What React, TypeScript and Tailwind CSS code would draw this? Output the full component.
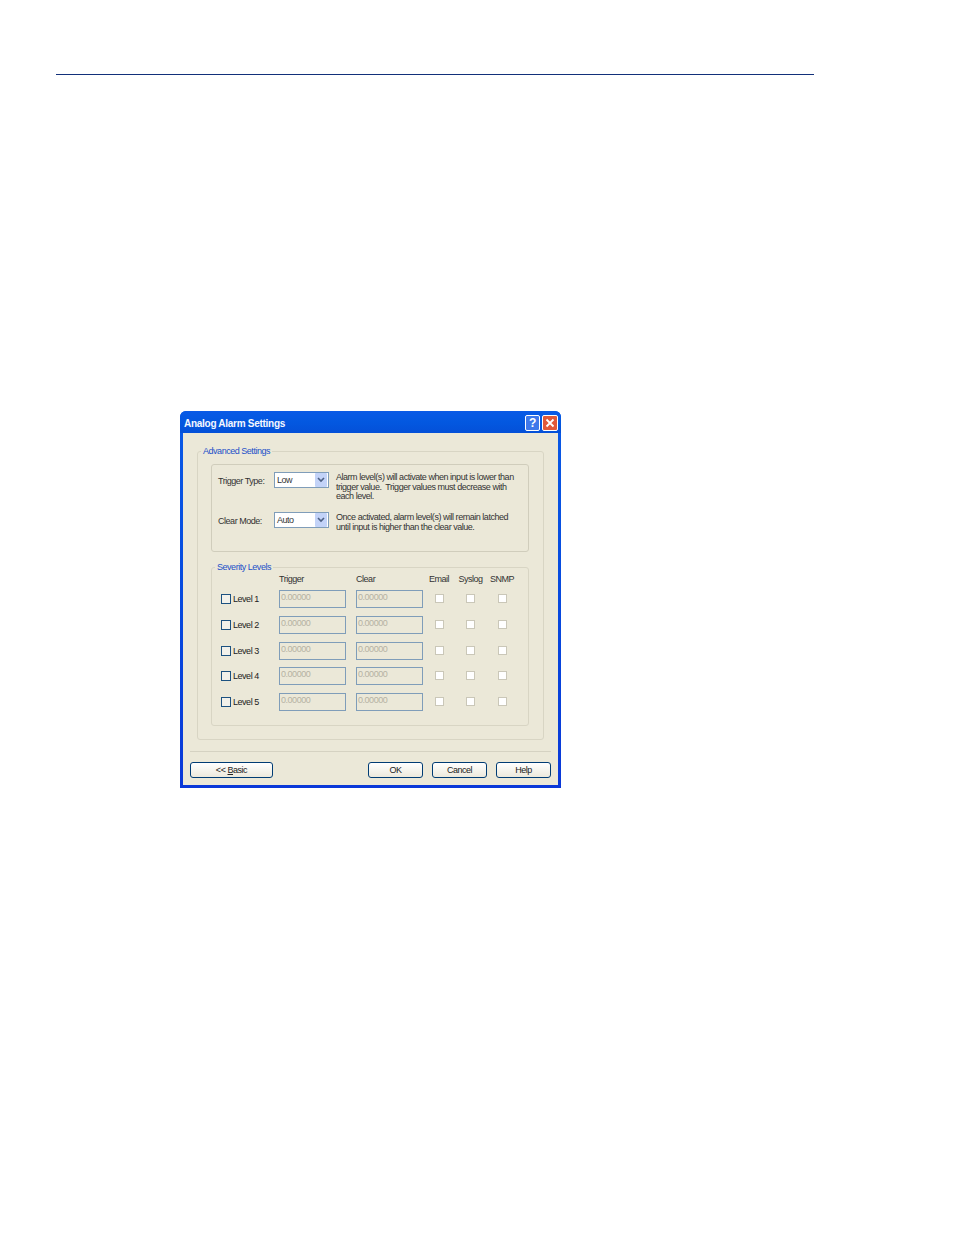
import React from "react";

const font = "font-['Liberation_Sans',Arial,sans-serif]";

const levels = [
  { name: "Level 1", gap: "mt-[5px]" },
  { name: "Level 2", gap: "mt-[8px]" },
  { name: "Level 3", gap: "mt-[8px]" },
  { name: "Level 4", gap: "mt-[7px]" },
  { name: "Level 5", gap: "mt-[8px]" },
];

const rowGrid = "grid grid-cols-[58px_67px_10px_67px_32px_31px_32px] items-center";

const Combo = ({ value }: { value: string }) => (
  <div className="flex h-[16px] w-[55px] items-center justify-between border border-[#7f9db9] bg-white pl-[2px] pr-px">
    <span>{value}</span>
    <span className="flex h-[14px] w-[12px] items-center justify-center rounded-[1px] bg-[#c3d3f8]">
      <svg width="8" height="6" viewBox="0 0 8 6">
        <path d="M1 1l3 3 3-3" fill="none" stroke="#4d6185" strokeWidth="1.6" />
      </svg>
    </span>
  </div>
);

const XpButton = ({ className, children }: { className: string; children: React.ReactNode }) => (
  <button className={`h-[16px] rounded-[3px] border border-[#003c74] bg-gradient-to-b from-white to-[#ece9dc] text-center leading-[12px] text-[#222] ${className}`}>
    {children}
  </button>
);

const App: React.FC = () => {
  return (
    <div className={`h-[1235px] w-[954px] bg-white pt-[74px] ${font}`}>
      <div className="ml-[56px] h-px w-[758px] bg-[#12307a]" />

      <div className="ml-[180px] mt-[336px] flex h-[377px] w-[381px] flex-col overflow-hidden rounded-t-[6px] bg-gradient-to-b from-[#0a5ae6] to-[#0a38d8] text-[9px] leading-[10px] tracking-[-0.47px] text-[#333]">
        {/* title bar */}
        <div className="flex h-[22px] shrink-0 items-center justify-between bg-gradient-to-b from-[#0a5ae6] via-[#0358e0] to-[#0450d8] pl-[4px] pr-[3px] pt-[2px]">
          <span className="mt-[2px] text-[10px] font-bold tracking-[-0.28px] text-[#f4f7ff]">Analog Alarm Settings</span>
          <div className="flex gap-[2px]">
            <span className="flex h-[16px] w-[15px] items-center justify-center rounded-[2px] border border-white bg-[#3f78ea] text-[12px] font-bold text-white">?</span>
            <span className="flex h-[16px] w-[16px] items-center justify-center rounded-[2px] border border-white bg-[#e0593a]">
              <svg width="10" height="10" viewBox="0 0 10 10">
                <path d="M1.5 1.5l7 7M8.5 1.5l-7 7" stroke="#fff" strokeWidth="1.8" />
              </svg>
            </span>
          </div>
        </div>

        {/* dialog body */}
        <div className="mx-[3px] mb-[3px] flex-1 bg-[#ebe8d8] pl-[14px] pr-[14px] pt-[12px]">
          <fieldset className="h-[295px] rounded-[3px] border border-[#d8d5c4]">
            <legend className="ml-[3px] h-[12px] px-[2px] leading-[12px] text-[#1c50c8]">Advanced Settings</legend>

            <div className="ml-[13px] mt-[7px] h-[88px] w-[318px] rounded-[3px] border border-[#d0cdbc] pl-[6px] pt-[7px]">
              <div className="flex h-[40px]">
                <span className="mt-[4px] w-[56px]">Trigger Type:</span>
                <Combo value="Low" />
                <p className="ml-[7px] mt-[1px] w-[186px] leading-[9.5px]">
                  Alarm level(s) will activate when input is lower than trigger value.&nbsp; Trigger values must decrease with each level.
                </p>
              </div>
              <div className="flex">
                <span className="mt-[4px] w-[56px]">Clear Mode:</span>
                <Combo value="Auto" />
                <p className="ml-[7px] mt-[1px] w-[186px] leading-[9.5px]">
                  Once activated, alarm level(s) will remain latched until input is higher than the clear value.
                </p>
              </div>
            </div>

            <fieldset className="ml-[13px] mt-[9px] h-[165px] w-[318px] rounded-[3px] border border-[#d8d5c4]">
              <legend className="ml-[3px] h-[12px] px-[2px] leading-[12px] text-[#1c50c8]">Severity Levels</legend>
              <div className="pl-[9px]">
                <div className={`${rowGrid} h-[12px]`}>
                  <span />
                  <span>Trigger</span>
                  <span />
                  <span>Clear</span>
                  <span className="text-center">Email</span>
                  <span className="text-center">Syslog</span>
                  <span className="text-center">SNMP</span>
                </div>
                {levels.map((level) => (
                  <div key={level.name} className={`${rowGrid} h-[18px] ${level.gap}`}>
                    <div className="flex items-center">
                      <span className="h-[10px] w-[10px] border border-[#1c5180] bg-[#f2f1ea]" />
                      <span className="ml-[2px] text-[#222]">{level.name}</span>
                    </div>
                    <div className="h-[18px] border border-[#7f9db9] pl-[1px] leading-[13px] text-[#b5b2a3]">0.00000</div>
                    <span />
                    <div className="h-[18px] border border-[#7f9db9] pl-[1px] leading-[13px] text-[#b5b2a3]">0.00000</div>
                    <span className="mx-auto mb-[2px] h-[9px] w-[9px] border border-[#cac7b8] bg-white" />
                    <span className="mx-auto mb-[2px] h-[9px] w-[9px] border border-[#cac7b8] bg-white" />
                    <span className="mx-auto mb-[2px] h-[9px] w-[9px] border border-[#cac7b8] bg-white" />
                  </div>
                ))}
              </div>
            </fieldset>
          </fieldset>

          {/* footer */}
          <div className="-ml-[7px] -mr-[7px] mt-[11px] h-px bg-[#d5d2c2]" />
          <div className="-ml-[7px] mt-[10px] flex w-[361px]">
            <XpButton className="w-[83px]">
              &lt;&lt; <span className="underline">B</span>asic
            </XpButton>
            <XpButton className="ml-[95px] w-[55px]">OK</XpButton>
            <XpButton className="ml-[9px] w-[55px]">Cancel</XpButton>
            <XpButton className="ml-[9px] w-[55px]">Help</XpButton>
          </div>
        </div>
      </div>
    </div>
  );
};

export default App;
